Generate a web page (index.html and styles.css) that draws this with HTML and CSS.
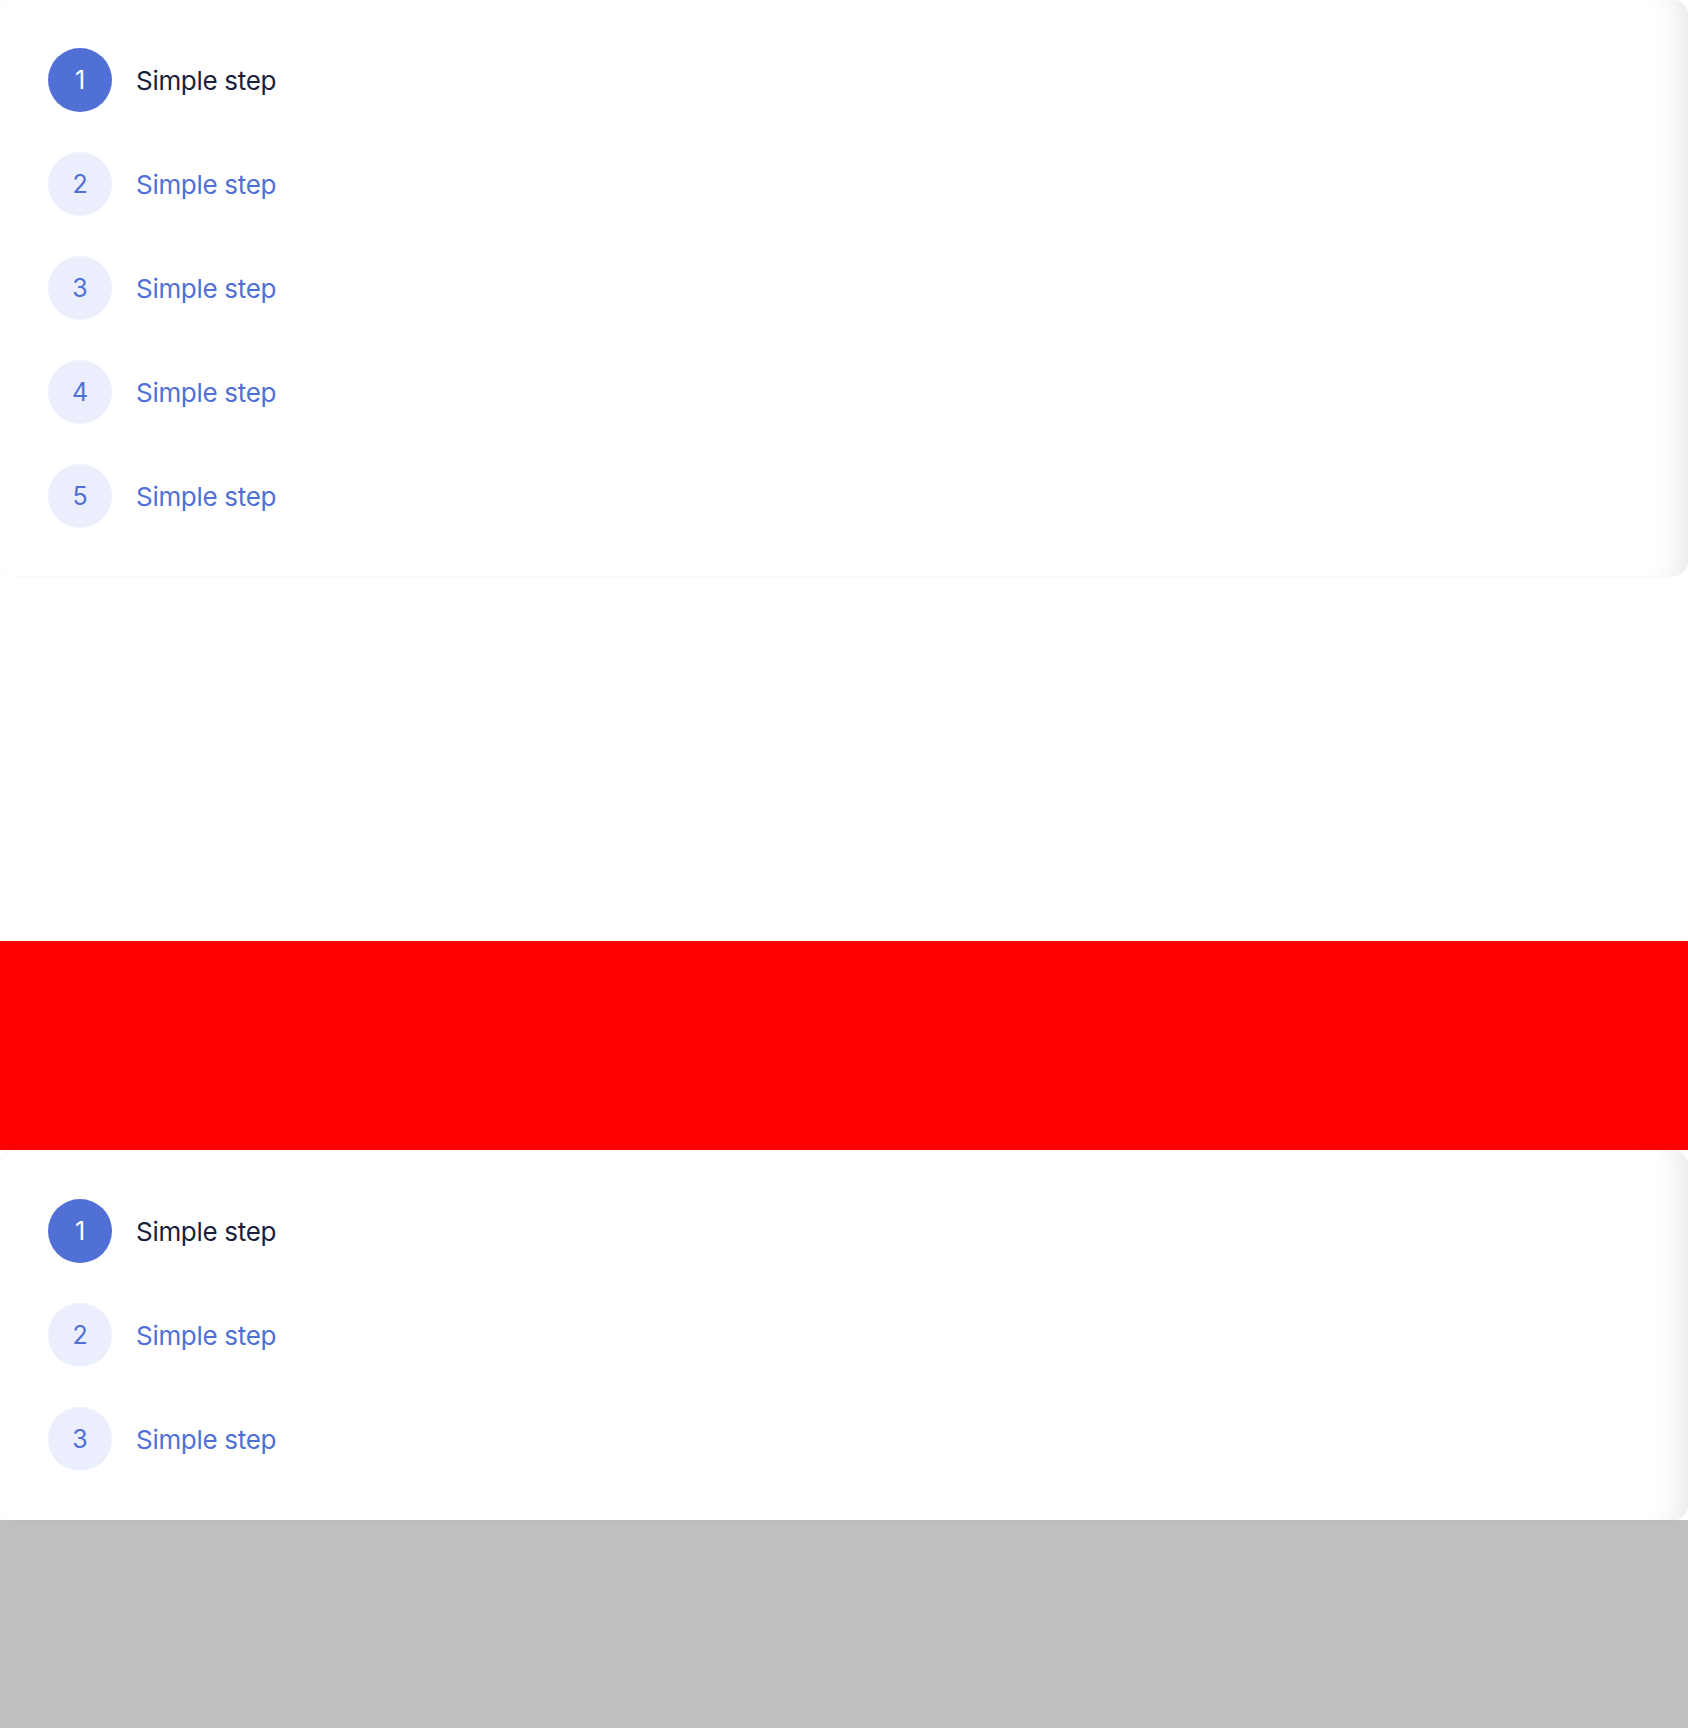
FILE: index.html
```html
<!DOCTYPE html>
<html lang="en">
<head>
<meta charset="utf-8">
<title>Steps</title>
<link rel="stylesheet" href="styles.css">
</head>
<body>
<div class="page">
  <section class="card">
    <ol class="steps">
      <li class="step step--active"><span class="step__num">1</span><span class="step__label">Simple step</span></li>
      <li class="step"><span class="step__num">2</span><span class="step__label">Simple step</span></li>
      <li class="step"><span class="step__num">3</span><span class="step__label">Simple step</span></li>
      <li class="step"><span class="step__num">4</span><span class="step__label">Simple step</span></li>
      <li class="step"><span class="step__num">5</span><span class="step__label">Simple step</span></li>
    </ol>
  </section>
  <div class="spacer"></div>
  <div class="band"></div>
  <section class="card card--short">
    <ol class="steps">
      <li class="step step--active"><span class="step__num">1</span><span class="step__label">Simple step</span></li>
      <li class="step"><span class="step__num">2</span><span class="step__label">Simple step</span></li>
      <li class="step"><span class="step__num">3</span><span class="step__label">Simple step</span></li>
    </ol>
  </section>
</div>
</body>
</html>
```

FILE: styles.css
```css
html {
  background: #bfbfbf;
}
body {
  margin: 0;
  min-height: 1728px;
  background: #bfbfbf;
  font-family: Inter, "Noto Sans", sans-serif;
}
.page {
  background: #ffffff;
  display: flex;
  flex-direction: column;
}
.card {
  background: #ffffff;
  border-radius: 16px;
  padding: 48px;
  box-shadow: inset -30px 0 26px -22px rgba(0, 0, 0, 0.09), 0 0 3px rgba(0, 0, 0, 0.06);
  position: relative;
}
.card--short {
  padding-top: 49px;
  padding-bottom: 49px;
}
.steps {
  list-style: none;
  margin: 0;
  padding: 0;
  display: flex;
  flex-direction: column;
  gap: 40px;
}
.step {
  display: flex;
  align-items: center;
  gap: 24px;
}
.step__num {
  width: 64px;
  height: 64px;
  border-radius: 50%;
  background: #ebeefd;
  color: #5170d6;
  display: flex;
  align-items: center;
  justify-content: center;
  font-size: 25px;
  font-weight: 400;
  flex: none;
}
.step__label {
  font-size: 26px;
  color: #5170d6;
  letter-spacing: -0.3px;
}
.step--active .step__num {
  background: #5170d6;
  color: #ffffff;
}
.step--active .step__label {
  color: #1b1f3b;
}
.spacer {
  height: 365px;
  background: #ffffff;
}
.band {
  height: 209px;
  background: #ff0000;
}
```
